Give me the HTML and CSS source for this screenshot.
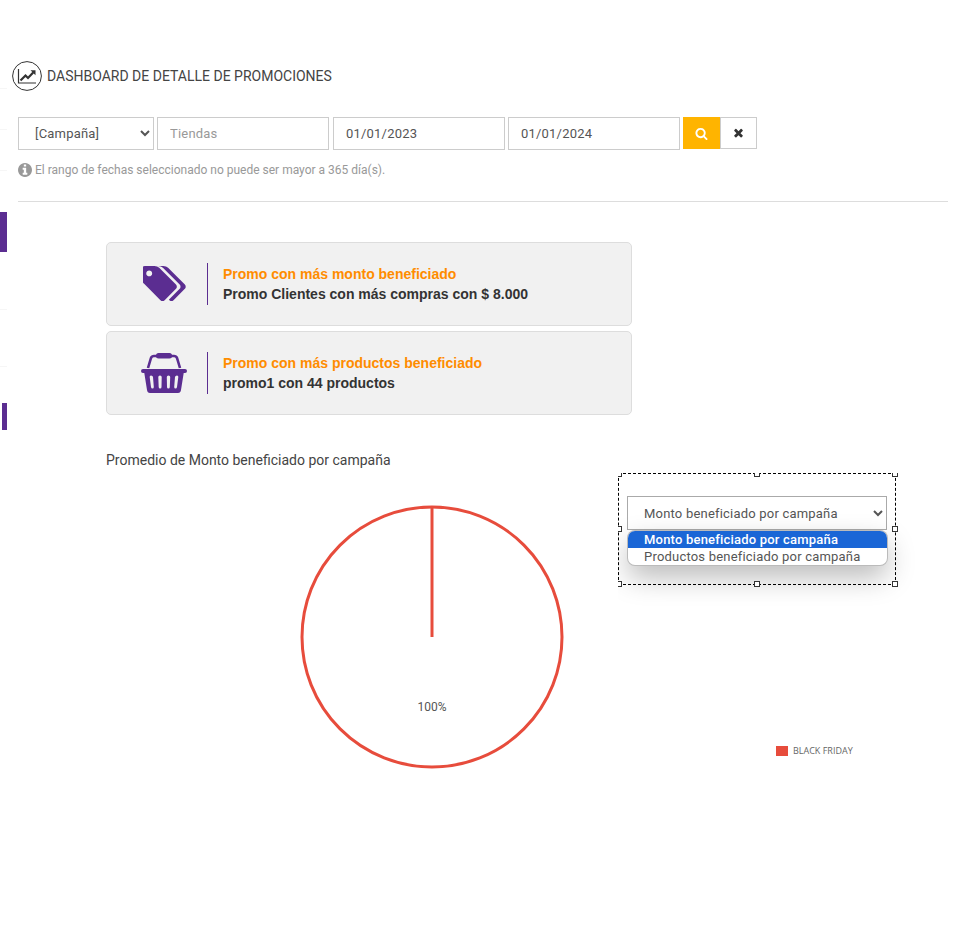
FILE: index.html
```html
<!DOCTYPE html>
<html lang="es">
<head>
  <meta charset="UTF-8">
  <meta name="viewport" content="width=device-width, initial-scale=1.0">
  <title>Dashboard de detalle de promociones</title>
  <link rel="stylesheet" href="styles.css">
</head>
<body>

  <!-- What is left of the collapsed side menu -->
  <div class="rail">
    <span class="rail-line rail-line-1"></span>
    <span class="rail-line rail-line-2"></span>
    <span class="rail-line rail-line-3"></span>
    <span class="rail-bar rail-bar-1"></span>
    <span class="rail-line rail-line-4"></span>
    <span class="rail-line rail-line-5"></span>
    <span class="rail-bar rail-bar-2"></span>
  </div>

  <header class="page-title">
    <svg class="title-icon" viewBox="0 0 30 30">
      <circle cx="15" cy="15" r="14.4" fill="none" stroke="#333" stroke-width="1"/>
      <path d="M6.5 8v14h17.5" fill="none" stroke="#333" stroke-width="1.2"/>
      <path d="M8.5 19.5l5-5 2.5 2.5 5.2-5.6" fill="none" stroke="#333" stroke-width="2.2"/>
      <path d="M18.5 9.2h5v5z" fill="#333"/>
    </svg>
    <h1>DASHBOARD DE DETALLE DE PROMOCIONES</h1>
  </header>

  <form class="filters">
    <select class="field field-campaign">
      <option>[Campaña]</option>
    </select>
    <input class="field" type="text" placeholder="Tiendas">
    <input class="field field-gap" type="text" value="01/01/2023">
    <input class="field" type="text" value="01/01/2024">
    <button class="btn btn-search" type="button">
      <svg viewBox="0 0 1792 1792"><path d="M1216 832q0-185-131.500-316.500t-316.500-131.500-316.500 131.500-131.500 316.500 131.500 316.500 316.500 131.500 316.500-131.500 131.500-316.500zm512 832q0 52-38 90t-90 38q-54 0-90-38l-343-342q-179 124-399 124-143 0-273.500-55.500t-225-150-150-225-55.500-273.500 55.500-273.500 150-225 225-150 273.500-55.500 273.500 55.500 225 150 150 225 55.500 273.500q0 220-124 399l343 343q37 37 37 90z"/></svg>
    </button>
    <button class="btn btn-clear" type="button">
      <svg viewBox="0 0 1408 1792"><path d="M1298 1214q0 40-28 68l-136 136q-28 28-68 28t-68-28l-294-294-294 294q-28 28-68 28t-68-28l-136-136q-28-28-28-68t28-68l294-294-294-294q-28-28-28-68t28-68l136-136q28-28 68-28t68 28l294 294 294-294q28-28 68-28t68 28l136 136q28 28 28 68t-28 68l-294 294 294 294q28 28 28 68z"/></svg>
    </button>
  </form>

  <p class="hint">
    <svg viewBox="0 0 1536 1536"><path d="M1024 1248v-160q0-14-9-23t-23-9h-96v-512q0-14-9-23t-23-9h-320q-14 0-23 9t-9 23v160q0 14 9 23t23 9h96v320h-96q-14 0-23 9t-9 23v160q0 14 9 23t23 9h448q14 0 23-9t9-23zm-128-896v-160q0-14-9-23t-23-9h-192q-14 0-23 9t-9 23v160q0 14 9 23t23 9h192q14 0 23-9t9-23zm640 416q0 209-103 385.500t-279.500 279.500-385.500 103-385.500-103-279.500-279.500-103-385.500 103-385.500 279.500-279.500 385.500-103 385.500 103 279.500 279.500 103 385.500z"/></svg>
    El rango de fechas seleccionado no puede ser mayor a 365 día(s).
  </p>

  <hr class="divider">

  <section class="cards">
    <div class="card">
      <div class="card-icon">
        <svg class="icon-tags" viewBox="0 128 1835 1600"><path d="M384 448q0-53-37.500-90.500t-90.500-37.500-90.500 37.500-37.500 90.500 37.500 90.500 90.500 37.500 90.500-37.500 37.500-90.500zm1067 576q0 53-37 90l-491 492q-39 37-91 37-53 0-90-37l-715-716q-38-37-64.500-101t-26.500-117v-416q0-52 38-90t90-38h416q53 0 117 26.500t102 64.500l715 714q37 39 37 91zm384 0q0 53-37 90l-491 492q-38 37-91 37-36 0-59-14t-53-45l470-470q37-37 37-90 0-52-37-91l-715-714q-38-38-102-64.500t-117-26.500h224q53 0 117 26.500t102 64.500l715 714q37 39 37 91z"/></svg>
      </div>
      <div class="card-text">
        <strong>Promo con más monto beneficiado</strong>
        <span class="card-value">Promo Clientes con más compras con $ 8.000</span>
      </div>
    </div>
    <div class="card">
      <div class="card-icon">
        <svg class="icon-basket" viewBox="0 0 46 40">
          <path d="M7 15l3-10q.8-2 3-2h20q2.200 0 3 2l3 10" fill="none" stroke="#5b2d91" stroke-width="2.600"/>
          <rect x="15" y="0" width="16" height="5.500" rx="2.500"/>
          <path fill-rule="evenodd" d="M2 16h42q2 0 2 2t-2 2h-1.300l-2.700 17q-.4 3-3 3H9q-2.600 0-3-3L3.300 20H2q-2 0-2-2t2-2zM10 22.500q-1.500 0-1.300 1.500l1.300 10q.2 1.500 1.500 1.500t1.300-1.500l-.8-10q-.2-1.500-2-1.500zm9 0q-1.700 0-1.700 1.500l.4 10q0 1.500 1.400 1.500t1.400-1.500l.2-10q0-1.500-1.700-1.500zm8.500 0q-1.700 0-1.700 1.500l.2 10q0 1.500 1.400 1.500t1.400-1.500l.4-10q0-1.500-1.700-1.500zm8.500 0q-1.800 0-2 1.500l-.8 10q0 1.500 1.300 1.500t1.500-1.500l1.300-10q.2-1.500-1.300-1.500z"/>
        </svg>
      </div>
      <div class="card-text">
        <strong>Promo con más productos beneficiado</strong>
        <span class="card-value">promo1 con 44 productos</span>
      </div>
    </div>
  </section>

  <section class="chart">
    <h2>Promedio de Monto beneficiado por campaña</h2>

    <svg class="pie" viewBox="0 0 264 264">
      <circle cx="132" cy="132" r="130" fill="#fff" stroke="#e74c3c" stroke-width="3"/>
      <path d="M132 132V2" stroke="#e74c3c" stroke-width="3"/>
      <text x="132" y="206" text-anchor="middle">100%</text>
    </svg>

    <div class="legend">
      <span class="legend-swatch"></span>
      <span>BLACK FRIDAY</span>
    </div>

    <!-- Selector with its list open, still inside the editor's selection frame -->
    <div class="picker">
      <div class="picker-frame">
        <span class="handle handle-tl"></span>
        <span class="handle handle-tc"></span>
        <span class="handle handle-tr"></span>
        <span class="handle handle-ml"></span>
        <span class="handle handle-mr"></span>
        <span class="handle handle-bl"></span>
        <span class="handle handle-bc"></span>
        <span class="handle handle-br"></span>
      </div>
      <select class="picker-select">
        <option>Monto beneficiado por campaña</option>
        <option>Productos beneficiado por campaña</option>
      </select>
      <ul class="picker-list">
        <li class="is-selected">Monto beneficiado por campaña</li>
        <li>Productos beneficiado por campaña</li>
      </ul>
    </div>
  </section>

</body>
</html>
```

FILE: styles.css
```css
* {
  box-sizing: border-box;
}

body {
  margin: 0;
  padding: 61px 16px 0 18px;
  min-height: 947px;
  background-color: #fff;
  color: #444;
  font-family: Roboto, "Liberation Sans", sans-serif;
  position: relative;
  overflow-x: hidden;
}

/* Side menu remains */
.rail {
  position: absolute;
  top: 0;
  left: 0;
  width: 7px;
  display: flex;
  flex-direction: column;
  align-items: flex-end;
}

.rail-line {
  display: block;
  width: 7px;
  height: 1px;
  background-color: #f6f6f6;
}

.rail-line-1 { margin-top: 88px; }
.rail-line-2 { margin-top: 40px; }
.rail-line-3 { margin-top: 40px; }
.rail-line-4 { margin-top: 57px; }
.rail-line-5 { margin-top: 56px; }

.rail-bar {
  display: block;
  background-color: #5b2d91;
}

.rail-bar-1 {
  width: 7px;
  height: 40px;
  margin-top: 41px;
}

.rail-bar-2 {
  width: 5px;
  height: 27px;
  margin-top: 36px;
}

/* Title */
.page-title {
  display: flex;
  align-items: center;
  gap: 5px;
  height: 30px;
  margin-left: -6px;
}

.title-icon {
  width: 30px;
  height: 30px;
}

.page-title h1 {
  margin: 0;
  font-size: 14px;
  font-weight: 400;
  color: #444;
}

/* Filters */
.filters {
  display: flex;
  align-items: flex-start;
  gap: 3px;
  margin-top: 26px;
}

.field {
  width: 172px;
  height: 33px;
  padding: 0 12px;
  border: 1px solid #ccc;
  background-color: #fff;
  color: #555;
  font-family: inherit;
  font-size: 13px;
  border-radius: 0;
  letter-spacing: 0.2px;
}

.field::placeholder {
  color: #999;
}

.field-campaign {
  width: 136px;
  padding-left: 12px;
}

.field-gap {
  margin-left: 1px;
}

.btn {
  width: 37px;
  height: 32px;
  padding: 0;
  display: flex;
  align-items: center;
  justify-content: center;
  border: 1px solid #ccc;
  background-color: #fff;
}

.btn svg {
  width: 13px;
  height: 13px;
  fill: #333;
}

.btn-search {
  background-color: #ffb400;
  border-color: #ffb400;
}

.btn-search svg {
  fill: #fff;
}

.btn-clear {
  margin-left: -3px;
}

.hint {
  display: flex;
  align-items: center;
  gap: 3px;
  margin: 13px 0 0;
  height: 14px;
  font-size: 12px;
  color: #999;
}

.hint svg {
  width: 14px;
  height: 14px;
  fill: #999;
}

.divider {
  margin: 24px 0 0;
  border: 0;
  border-top: 1px solid #ddd;
}

/* Promo cards */
.cards {
  display: flex;
  flex-direction: column;
  gap: 5px;
  width: 526px;
  margin: 40px 0 0 88px;
}

.card {
  display: flex;
  align-items: center;
  height: 84px;
  border: 1px solid #ddd;
  border-radius: 5px;
  background-color: #f1f1f1;
}

.card-icon {
  width: 101px;
  height: 42px;
  display: flex;
  align-items: center;
  justify-content: center;
  padding-left: 14px;
  border-right: 1px solid #5b2d91;
  fill: #5b2d91;
}

.icon-tags {
  width: 43px;
  height: 37px;
}

.icon-basket {
  width: 46px;
  height: 40px;
}

.card-text {
  display: flex;
  flex-direction: column;
  gap: 4px;
  padding-left: 15px;
  font-family: "Liberation Sans", Arial, sans-serif;
  font-size: 14px;
  line-height: 16px;
}

.card-text strong {
  color: #ff8c00;
}

.card-value {
  font-weight: 700;
  color: #333;
}

/* Chart */
.chart {
  position: relative;
  margin: 37px 0 0 88px;
  height: 320px;
}

.chart h2 {
  margin: 0;
  font-size: 14px;
  line-height: 16px;
  font-weight: 400;
  color: #444;
}

.pie {
  display: block;
  width: 264px;
  height: 264px;
  margin: 37px 0 0 194px;
}

.pie text {
  font-family: Roboto, sans-serif;
  font-size: 12px;
  fill: #555;
}

.legend {
  position: absolute;
  top: 292px;
  left: 670px;
  display: flex;
  align-items: center;
  gap: 5px;
  font-family: "Open Sans", sans-serif;
  font-size: 9px;
  color: #666;
}

.legend-swatch {
  width: 12px;
  height: 10px;
  background-color: #e74c3c;
}

/* Open selector */
.picker {
  position: absolute;
  top: 21px;
  left: 512px;
  width: 300px;
  height: 137px;
  overflow: hidden;
}

.picker-frame {
  position: absolute;
  top: 0;
  left: 0;
  width: 278px;
  height: 112px;
  border: 1px dashed #000;
  z-index: 2;
  pointer-events: none;
}

.handle {
  position: absolute;
  width: 6px;
  height: 6px;
  border: 1px solid #333;
  background-color: #fff;
}

.handle-tl { top: -3px; left: -3px; }
.handle-tc { top: -3px; left: 135px; }
.handle-tr { top: -3px; right: -3px; }
.handle-ml { top: 52px; left: -3px; }
.handle-mr { top: 52px; right: -3px; }
.handle-bl { bottom: -3px; left: -3px; }
.handle-bc { bottom: -3px; left: 135px; }
.handle-br { bottom: -3px; right: -3px; }

.picker-select {
  position: absolute;
  top: 23px;
  left: 9px;
  width: 260px;
  height: 34px;
  padding: 0 12px;
  border: 1px solid #aaa;
  border-radius: 0;
  background-color: #fff;
  color: #555;
  font-family: inherit;
  font-size: 13px;
  letter-spacing: 0.2px;
}

.picker-list {
  position: absolute;
  top: 58px;
  left: 10px;
  width: 259px;
  margin: 0;
  padding: 0;
  list-style: none;
  border-radius: 7px;
  background-color: #fff;
  box-shadow: 0 0 0 1px #bbb, 0 12px 28px rgba(0, 0, 0, 0.28);
  overflow: hidden;
  font-size: 13px;
  letter-spacing: 0.2px;
  line-height: 17px;
  color: #555;
}

.picker-list li {
  padding-left: 16px;
}

.picker-list .is-selected {
  background-color: #1a66d6;
  color: #fff;
  font-weight: 500;
}
```
